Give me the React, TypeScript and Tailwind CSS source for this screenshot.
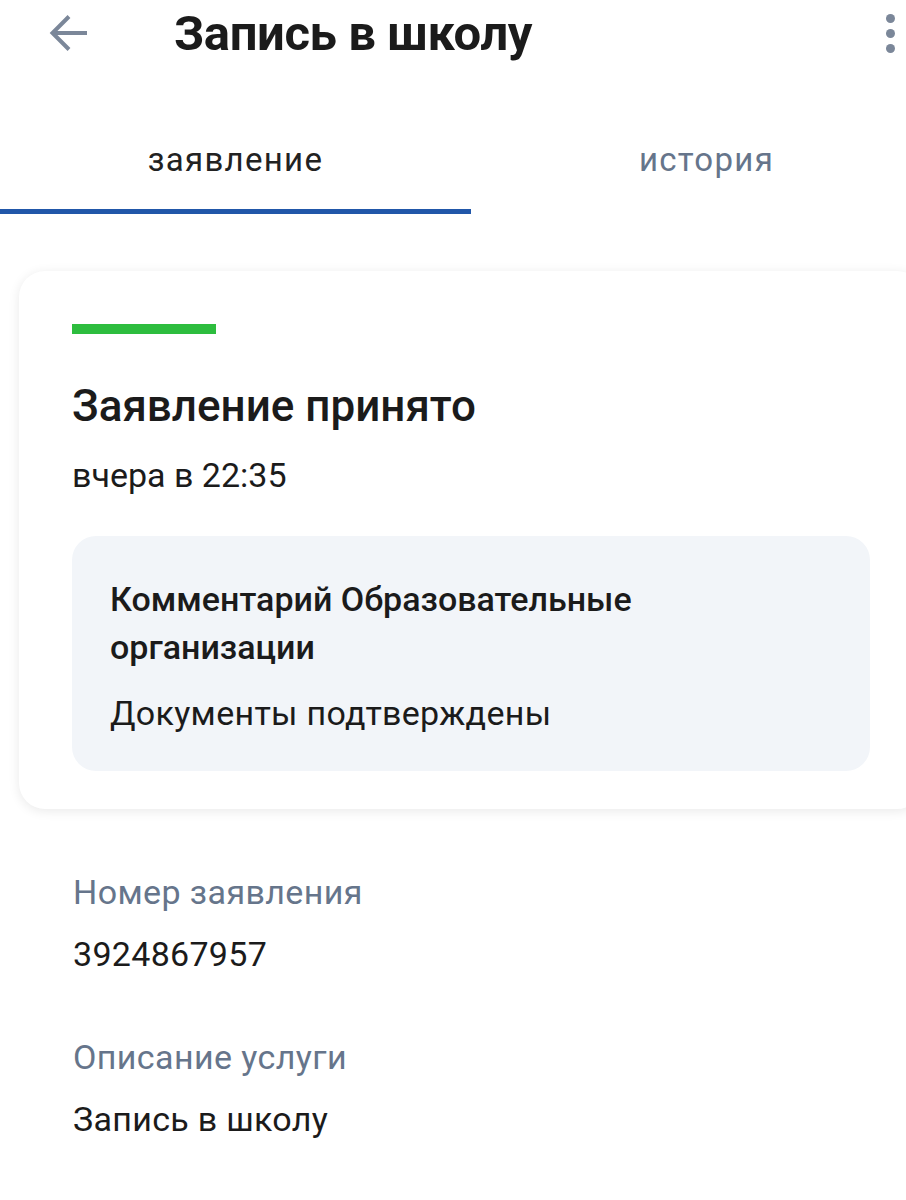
const details = [
    { label: "Номер заявления", value: "3924867957" },
    { label: "Описание услуги", value: "Запись в школу" },
];

function BackArrow() {
    return (
        <svg width="40" height="40" viewBox="0 0 40 40" fill="none" stroke="#7b8799" strokeWidth="4" strokeLinejoin="miter">
            <path d="M39 20H5" />
            <path d="M21 3.5L4.5 20L21 36.5" />
        </svg>
    );
}

export default function App() {
    return (
        <div className="w-[906px] h-[1200px] bg-white overflow-hidden">
            <div className="w-[942px] font-['Roboto',sans-serif] text-[#1b1b1b]">
                {/* Header */}
                <div className="flex items-center h-[66px] pl-[48px] pr-[47px]">
                    <BackArrow />
                    <h1 className="ml-[86px] text-[49px] font-bold tracking-[-0.4px] leading-none">
                        Запись в школу
                    </h1>
                    <div className="ml-auto flex flex-col gap-[6px]">
                        <span className="block w-[9px] h-[9px] rounded-full bg-[#7b8799]" />
                        <span className="block w-[9px] h-[9px] rounded-full bg-[#7b8799]" />
                        <span className="block w-[9px] h-[9px] rounded-full bg-[#7b8799]" />
                    </div>
                </div>

                {/* Tabs */}
                <div className="grid grid-cols-2 mt-[58px]">
                    <div className="flex flex-col items-center">
                        <span className="text-[33px] tracking-[1.3px] leading-[72px] text-[#222]">заявление</span>
                        <div className="w-full h-[5px] mt-[13px] bg-[#2157a9]" />
                    </div>
                    <div className="flex flex-col items-center">
                        <span className="text-[33px] tracking-[1.3px] leading-[72px] text-[#66758b]">история</span>
                    </div>
                </div>

                {/* Status card */}
                <div className="mx-[19px] mt-[57px] rounded-[26px] bg-white shadow-[0_2px_12px_rgba(0,0,0,0.09)] px-[53px] pt-[53px] pb-[38px]">
                    <div className="w-[144px] h-[10px] bg-[#2dbd3e]" />
                    <h2 className="mt-[47px] text-[44px] font-medium leading-[50px]">Заявление принято</h2>
                    <p className="mt-[24px] text-[34px] leading-[40px]">вчера в 22:35</p>
                    <div className="mt-[41px] rounded-[24px] bg-[#f2f5f9] px-[38px] pt-[39px] pb-[38px]">
                        <p className="text-[34px] font-medium leading-[48px] w-[620px]">
                            Комментарий Образовательные организации
                        </p>
                        <p className="mt-[22px] text-[34px] tracking-[0.3px] leading-[40px]">Документы подтверждены</p>
                    </div>
                </div>

                {/* Details */}
                <div className="px-[73px] mt-[63px] flex flex-col gap-[63px]">
                    {details.map((item) => (
                        <div key={item.label} className="flex flex-col gap-[22px]">
                            <span className="text-[34px] leading-[40px] text-[#66758b] tracking-[0.4px]">{item.label}</span>
                            <span className="text-[34px] leading-[40px] tracking-[0.3px]">{item.value}</span>
                        </div>
                    ))}
                </div>
            </div>
        </div>
    );
}
